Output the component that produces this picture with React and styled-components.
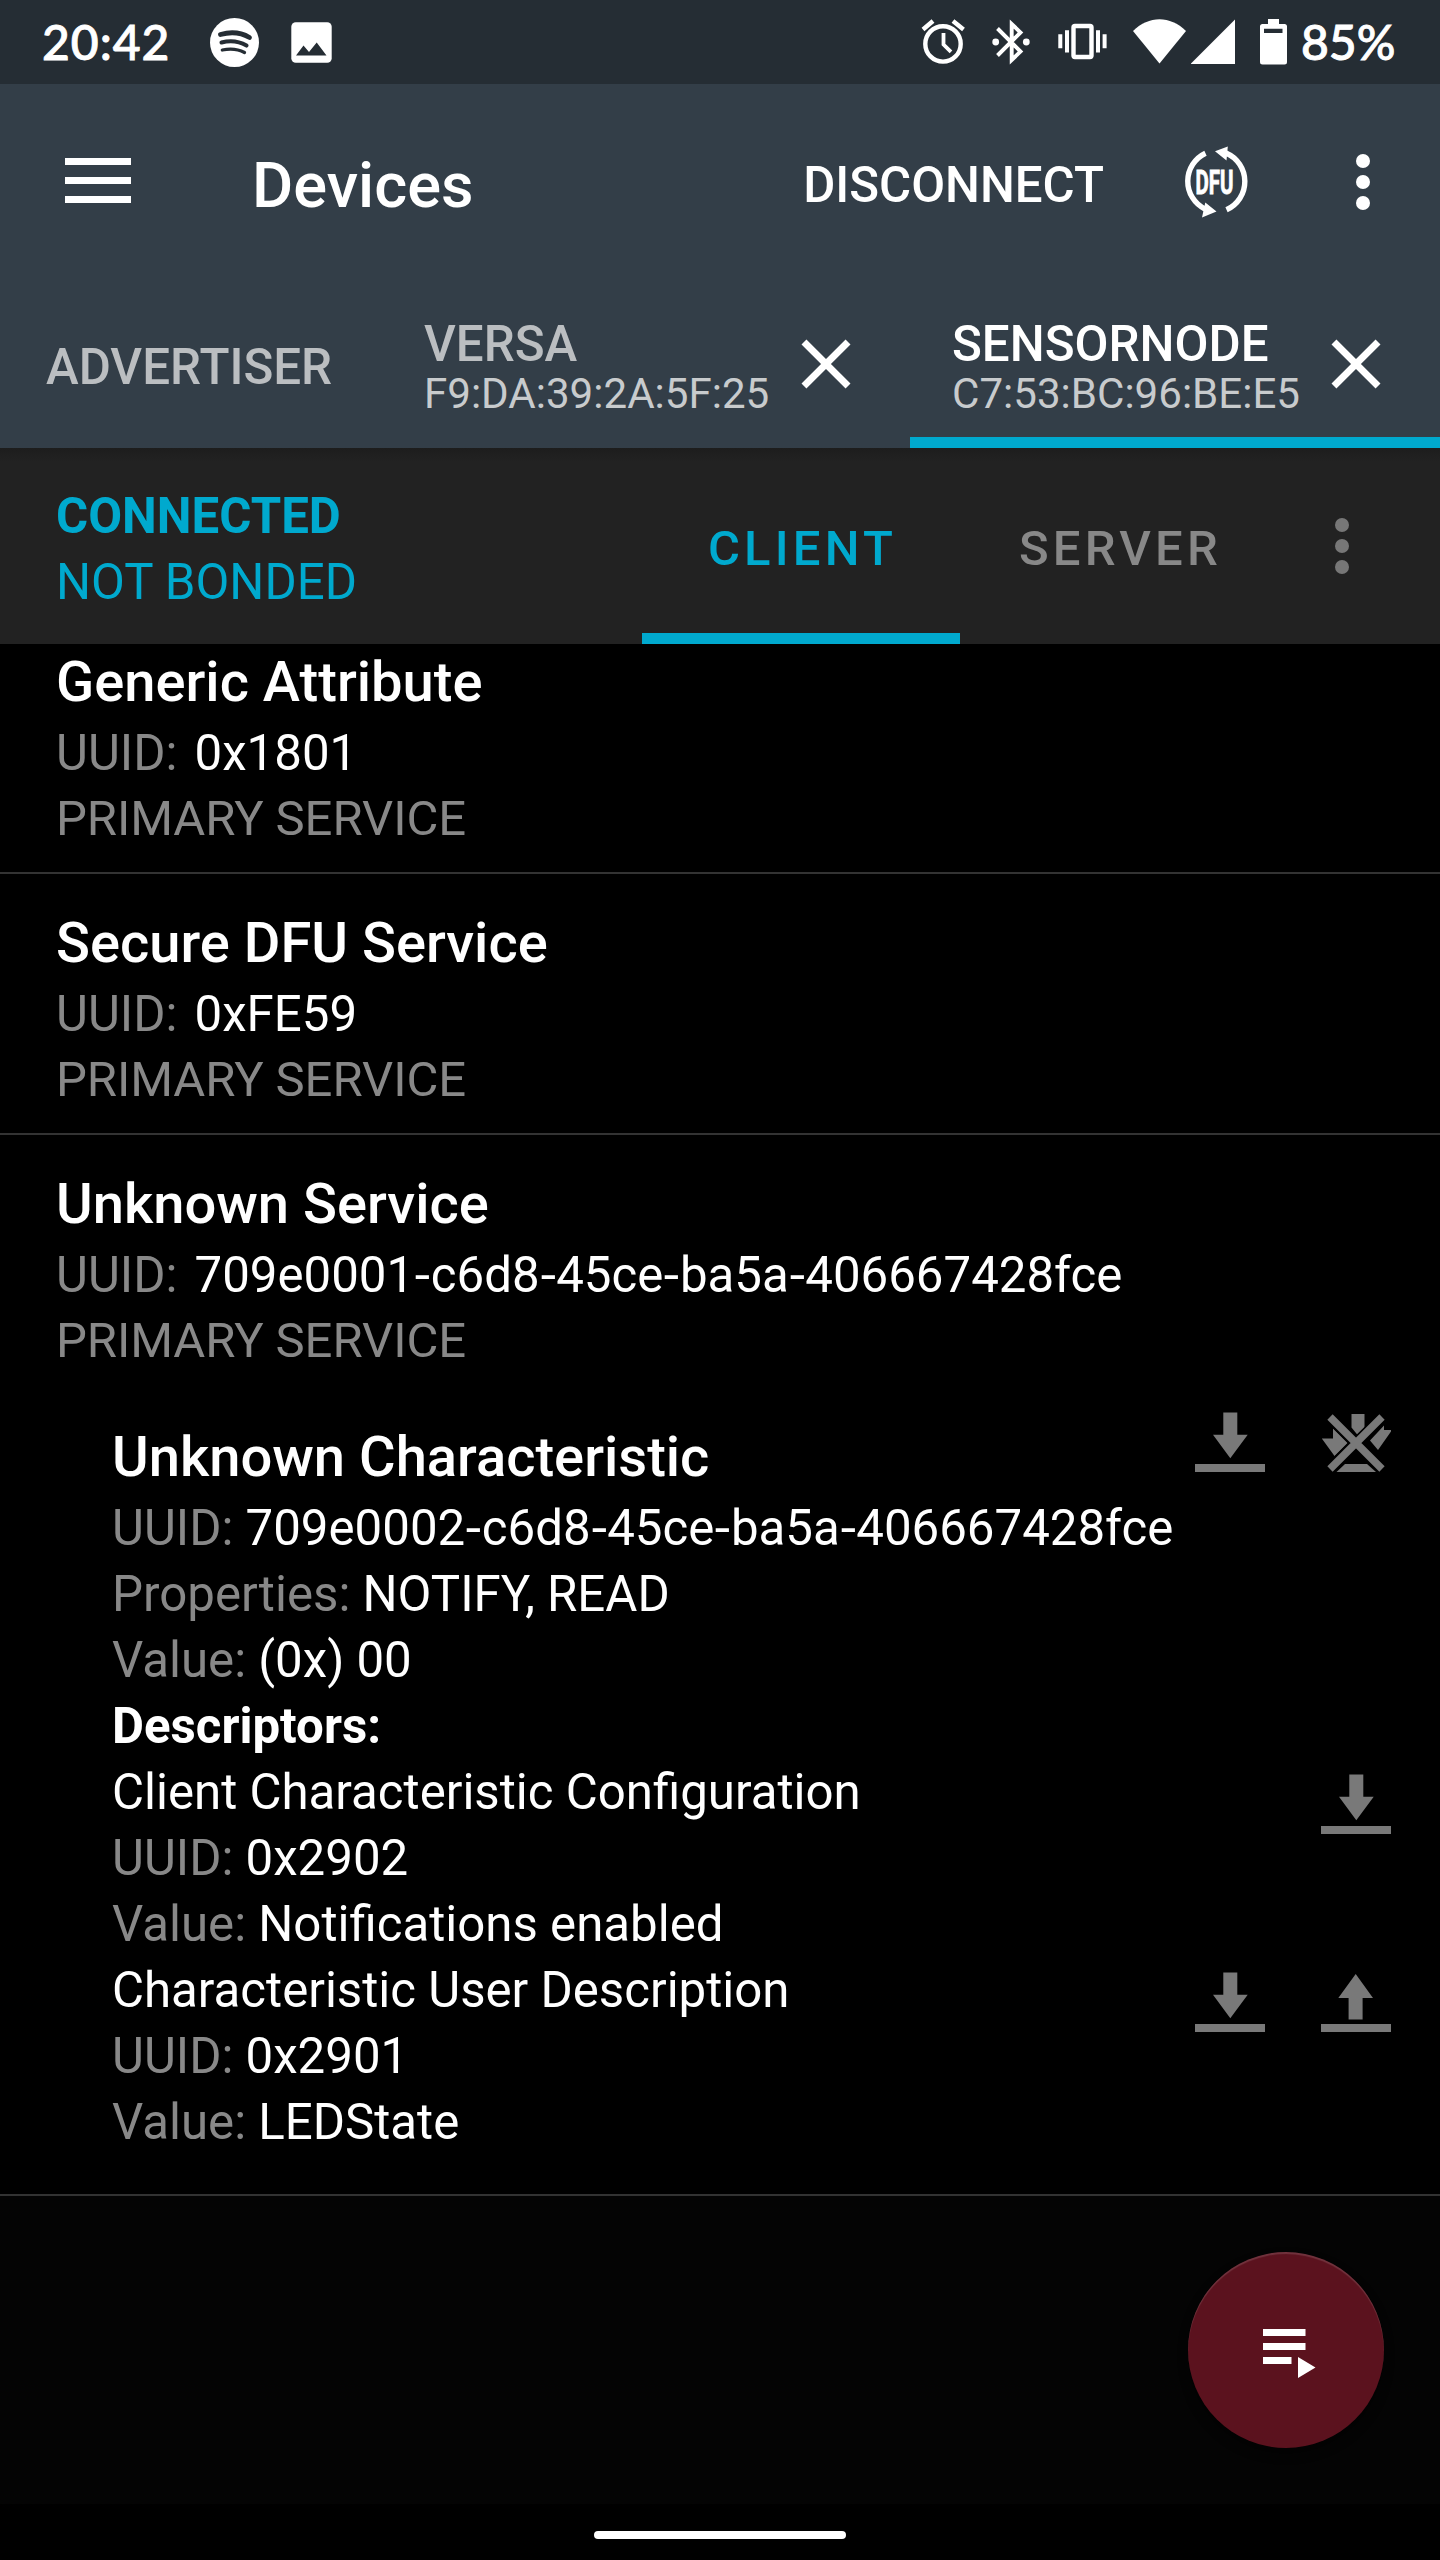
import React from "react";
import styled, { createGlobalStyle, css } from "styled-components";

const GlobalStyle = createGlobalStyle`
  * { box-sizing: border-box; }
  html, body { margin: 0; padding: 0; background: #000; }
  body { font-family: Roboto, "Noto Sans", sans-serif; color: #fff; }
  svg { display: block; flex: none; }
`;

const ACCENT = "#00a9ce";

const Screen = styled.div`
  position: relative;
  width: 1440px;
  height: 2560px;
  overflow: hidden;
  display: flex;
  flex-direction: column;
  background: #000;
`;

const StatusBar = styled.div`
  height: 84px;
  flex: none;
  background: #252d34;
  display: flex;
  justify-content: space-between;
  padding: 0 42px 0 42px;
`;

const StatusGroup = styled.div`
  display: flex;
  align-items: flex-start;
`;

const StatusText = styled.span`
  font-family: Lato, Roboto, sans-serif;
  font-weight: 500;
  font-size: 48px;
  line-height: 60px;
  padding-top: 12px;
  white-space: nowrap;
  width: ${(p) => p.$width}px;
  margin-left: ${(p) => p.$gap || 0}px;
  letter-spacing: ${(p) => p.$spacing || 0}px;
  -webkit-text-stroke: 0.9px #fff;
`;

const StatusIcon = styled.svg`
  margin-top: ${(p) => p.$top}px;
  margin-left: ${(p) => p.$gap}px;
  fill: #fff;
`;

const AppBar = styled.header`
  height: 364px;
  flex: none;
  background: #333e48;
  display: flex;
  flex-direction: column;
`;

const Toolbar = styled.div`
  height: 196px;
  display: flex;
  align-items: center;
  padding: 0 70px 0 65px;
`;

const MenuBars = styled.div`
  width: 66px;
  display: flex;
  flex-direction: column;
  gap: 12px;
  margin-bottom: 3px;
`;

const Bar = styled.span`
  height: 7px;
  background: #fff;
`;

const ToolbarTitle = styled.h1`
  margin: 0 auto 0 121px;
  padding-top: 5px;
  font-size: 63.2px;
  font-weight: 500;
  line-height: 76px;
`;

const ToolbarAction = styled.button`
  border: 0;
  background: none;
  color: #fff;
  font: 500 49.2px/60px Roboto, sans-serif;
  padding: 6px 0 0;
  margin-right: 77px;
`;

const Dots = styled.div`
  width: 14px;
  display: flex;
  flex-direction: column;
  gap: 7px;
  margin-left: ${(p) => p.$gap}px;
`;

const Dot = styled.span`
  height: 14px;
  border-radius: 50%;
  background: ${(p) => p.$color};
`;

const DeviceTabs = styled.nav`
  height: 168px;
  display: flex;
`;

const DeviceTab = styled.div`
  width: ${(p) => p.$width}px;
  display: flex;
  align-items: center;
  justify-content: space-between;
  padding: ${(p) => (p.$active ? "11px" : "0")} 42px 0 ${(p) => p.$pad}px;
  border-bottom: ${(p) => (p.$active ? `11px solid ${ACCENT}` : "0")};
`;

const TabTexts = styled.div`
  display: flex;
  flex-direction: column;
  white-space: nowrap;
  padding-top: 5px;
`;

const TabName = styled.span`
  font-size: 49.3px;
  line-height: 54px;
  font-weight: 500;
  color: ${(p) => (p.$active ? "#fff" : "#bbbec1")};
  padding-top: ${(p) => p.$shift || 0}px;
`;

const TabAddress = styled.span`
  font-size: 42.1px;
  line-height: 46px;
  color: #c8cbcd;
`;

const ConnectionBar = styled.section`
  height: 196px;
  flex: none;
  background: linear-gradient(#1d1d1d, #222 14px);
  display: flex;
  padding-left: 56px;
`;

const ConnectionState = styled.div`
  width: 586px;
  padding-top: 35px;
  color: ${ACCENT};
`;

const StateLine = styled.div`
  font-size: 49.2px;
  line-height: 66px;
  font-weight: ${(p) => (p.$bold ? 700 : 400)};
`;

const RoleTab = styled.div`
  width: 318px;
  display: flex;
  justify-content: center;
  font-size: 49px;
  line-height: 60px;
  font-weight: 500;
  letter-spacing: 4.2px;
  padding: 71px 0 0 3px;
  color: ${(p) => (p.$active ? ACCENT : "#888")};
  border-bottom: ${(p) => (p.$active ? `11px solid ${ACCENT}` : "0")};
`;

const BarOverflow = styled.div`
  display: flex;
  align-items: center;
`;

const ServiceList = styled.main`
  height: 1552px;
  flex: none;
  overflow: hidden;
`;

const ScrollContent = styled.div`
  margin-top: -31px;
`;

const Service = styled.section`
  padding: 34px 0 ${(p) => (p.$expanded ? 40 : 21)}px 56px;
  border-bottom: 2px solid #333;
`;

const Heading = styled.h2`
  margin: 0 0 2px;
  font-size: 56.1px;
  line-height: 70px;
  font-weight: 500;
  white-space: nowrap;
`;

const Line = styled.div`
  font-size: 49.2px;
  line-height: 68px;
  height: 66px;
  white-space: pre;
  color: ${(p) => (p.$muted ? "#888" : "#fff")};
  ${(p) => p.$muted && css`font-size: 49px; letter-spacing: -0.08px;`}
  ${(p) => p.$bold && css`font-weight: 700;`}
`;

const Label = styled.span`
  color: #888;
  margin-right: ${(p) => (p.$wide ? 5 : 0)}px;
`;

const Hyphen = styled.span`
  display: inline-block;
  padding: 0 1.5px;
  transform: scaleX(1.12);
`;

const Entry = styled.div`
  display: flex;
  padding: ${(p) => p.$top || 0}px 21px 0 56px;
`;

const EntryBody = styled.div`
  flex: 1;
  min-width: 0;
`;

const Actions = styled.div`
  display: flex;
  align-self: flex-start;
  margin-top: ${(p) => p.$offset}px;
`;

const IconButton = styled.button`
  width: 126px;
  height: 62px;
  padding: 0;
  border: 0;
  background: none;
  display: flex;
  justify-content: center;
  color: #797979;
`;

const Footer = styled.div`
  height: 308px;
  flex: none;
  background: #040404;
`;

const NavBar = styled.div`
  flex: 1;
  display: flex;
  justify-content: center;
  align-items: flex-start;
  padding-top: 27px;
`;

const HomePill = styled.div`
  width: 252px;
  height: 8px;
  border-radius: 4px;
  background: #fff;
`;

const Fab = styled.button`
  position: absolute;
  right: 56px;
  bottom: 112px;
  width: 196px;
  height: 196px;
  border: 0;
  padding: 0;
  border-radius: 50%;
  background: #5b121e;
  box-shadow: inset 0 2px 1px rgba(255, 255, 255, 0.14), 0 6px 10px rgba(0, 0, 0, 0.5);
`;

const CloseIcon = () => (
  <svg width="84" height="84" viewBox="0 0 24 24" fill="#fff">
    <path d="M19 6.41 17.59 5 12 10.59 6.41 5 5 6.41 10.59 12 5 17.59 6.41 19 12 13.41 17.59 19 19 17.59 13.41 12z" />
  </svg>
);

const DfuIcon = () => (
  <svg width="70" height="72" viewBox="1182 146 70 72" fill="#fff">
    <g fill="none" stroke="#fff" strokeWidth="5.4">
      <path d="M1206.500 153.200A31 31 0 0 0 1206 209" />
      <path d="M1227.500 209.800A31 31 0 0 0 1227 153" />
    </g>
    <path d="M1206.300 202.500 1217.500 211.500 1203 217.500zM1228.800 146.500 1216 151.200 1227.500 160.500z" />
    <text transform="translate(1196.500 193.600) scale(0.61 1)" fontSize="33.500" fontWeight="700" fontFamily="Roboto" stroke="#fff" strokeWidth="0.900">DFU</text>
  </svg>
);

const ReadIcon = () => (
  <IconButton>
    <svg width="70" height="60" viewBox="0 0 70 60" fill="currentColor">
      <path d="M28.300.5h14v22.300h10.400L35.300 46.200 18 22.800h10.300zM0 52h70v8H0z" />
    </svg>
  </IconButton>
);

const WriteIcon = () => (
  <IconButton>
    <svg width="70" height="60" viewBox="0 0 70 60" fill="currentColor">
      <path d="M34.700 2 52 26H41.600v21.500h-14V26H17.300zM0 52h70v8H0z" />
    </svg>
  </IconButton>
);

const NotifyOffIcon = () => (
  <IconButton>
    <svg width="70" height="62" viewBox="1321 1412 70 62" fill="currentColor">
      <path d="M1351.500 1414h13v13.500l-6.500 8-6.500-8zM1333 1428.500 1347.500 1443 1334.500 1456 1321.800 1438.500H1333zM1384 1425.500v4.500h8l-14 20-8-9.500zM1345 1464h22l9 8h-39.500z" />
      <g fill="none" strokeLinecap="butt">
        <path d="M1330 1417.500 1382 1468.500M1382 1417.500 1330 1468.500" stroke="#000" strokeWidth="11" />
        <path d="M1330 1417 1382 1469M1382 1417 1330 1469" stroke="currentColor" strokeWidth="7.500" />
      </g>
    </svg>
  </IconButton>
);

const Overflow = ({ color, gap }) => (
  <Dots $gap={gap}>
    <Dot $color={color} />
    <Dot $color={color} />
    <Dot $color={color} />
  </Dots>
);

const Value = ({ text }) =>
  text.split("-").map((part, i) => (
    <React.Fragment key={i}>
      {i > 0 && <Hyphen>-</Hyphen>}
      {part}
    </React.Fragment>
  ));

const ServiceHead = ({ name, uuid }) => (
  <>
    <Heading>{name}</Heading>
    <Line><Label $wide>UUID: </Label><Value text={uuid} /></Line>
    <Line $muted>PRIMARY SERVICE</Line>
  </>
);

const Field = ({ label, value }) => (
  <Line><Label>{label}: </Label><Value text={value} /></Line>
);

export default function App() {
  return (
    <Screen>
      <GlobalStyle />
      <StatusBar>
        <StatusGroup>
          <StatusText $width={128} $spacing={1}>20:42</StatusText>
          <StatusIcon $top={18} $gap={40} width="49" height="49" viewBox="210 18 49 49">
            <circle cx="234.500" cy="42.500" r="24.500" />
            <g fill="none" stroke="#252d34" strokeLinecap="round">
              <path d="M220.500 34.500C230 31.800 241 32.500 249.500 37.500" strokeWidth="4.800" />
              <path d="M221.500 42.500C230 40.300 239 41.200 246.500 45.500" strokeWidth="4.100" />
              <path d="M222.300 50C230 48.400 238 49 244.500 52.500" strokeWidth="3.300" />
            </g>
          </StatusIcon>
          <StatusIcon $top={22} $gap={32} width="41" height="41" viewBox="291 22 41 41">
            <rect x="291.300" y="22.300" width="40.400" height="40.400" rx="4.500" />
            <path fill="#252d34" d="M296 55.500 303.500 45.500 309 52 316.700 42.500 326.500 55.500z" />
          </StatusIcon>
        </StatusGroup>
        <StatusGroup>
          <StatusIcon $top={19} $gap={0} width="44" height="46" viewBox="921 19 44 46">
            <g fill="none" stroke="#fff">
              <circle cx="943" cy="43.900" r="17.700" strokeWidth="4.400" />
              <path d="M943.500 33V44.500L951 51.800" strokeWidth="3.800" />
              <path d="M923 29.500 933 21M953 21 963.500 29.500" strokeWidth="4.400" />
            </g>
          </StatusIcon>
          <StatusIcon $top={19} $gap={26} width="40" height="46" viewBox="991 19 40 46">
            <path fill="none" stroke="#fff" strokeWidth="3.900" d="M997.500 28.500 1020.500 51.500 1011.700 60V24L1020.500 32.500 997.500 55.500" />
            <circle cx="995.700" cy="42" r="3.400" />
            <circle cx="1026.300" cy="42" r="3.400" />
          </StatusIcon>
          <StatusIcon $top={19} $gap={27} width="50" height="46" viewBox="1058 19 50 46">
            <path d="M1058.300 34.300h4v14h-4zM1065 30.300h4v22.300h-4zM1096 30.300h4v22.300h-4zM1102.600 34.300h4v14h-4z" />
            <rect x="1073.500" y="26" width="18" height="31" rx="1.500" fill="none" stroke="#fff" strokeWidth="4.400" />
          </StatusIcon>
          <StatusIcon $top={19} $gap={25} width="53" height="45" viewBox="1133 19 53 45">
            <path d="M1133 31C1149 15.300 1170 15.300 1186 31L1159.500 63.500z" />
          </StatusIcon>
          <StatusIcon $top={19} $gap={5} width="44" height="45" viewBox="1191 19 44 45">
            <path d="M1190.500 64 1235 19.500V64z" />
          </StatusIcon>
          <StatusIcon $top={19} $gap={25} width="27" height="46" viewBox="1260 19 27 46">
            <path fillRule="evenodd" d="M1268 19h11v5h5.500a2.500 2.500 0 0 1 2.500 2.500V62a2.500 2.500 0 0 1-2.500 2.500h-22a2.500 2.500 0 0 1-2.500-2.500V26.500a2.500 2.500 0 0 1 2.500-2.500h5.500zM1264 28.700v4.300h18.500v-4.300z" />
          </StatusIcon>
          <StatusText $width={97} $gap={14}>85%</StatusText>
        </StatusGroup>
      </StatusBar>

      <AppBar>
        <Toolbar>
          <MenuBars><Bar /><Bar /><Bar /></MenuBars>
          <ToolbarTitle>Devices</ToolbarTitle>
          <ToolbarAction>DISCONNECT</ToolbarAction>
          <DfuIcon />
          <Overflow color="#fff" gap={105} />
        </Toolbar>
        <DeviceTabs>
          <DeviceTab $width={382} $pad={46}>
            <TabName $shift={5}>ADVERTISER</TabName>
          </DeviceTab>
          <DeviceTab $width={528} $pad={42}>
            <TabTexts>
              <TabName>VERSA</TabName>
              <TabAddress>F9:DA:39:2A:5F:25</TabAddress>
            </TabTexts>
            <CloseIcon />
          </DeviceTab>
          <DeviceTab $width={530} $pad={42} $active>
            <TabTexts>
              <TabName $active>SENSORNODE</TabName>
              <TabAddress>C7:53:BC:96:BE:E5</TabAddress>
            </TabTexts>
            <CloseIcon />
          </DeviceTab>
        </DeviceTabs>
      </AppBar>

      <ConnectionBar>
        <ConnectionState>
          <StateLine $bold>CONNECTED</StateLine>
          <StateLine>NOT BONDED</StateLine>
        </ConnectionState>
        <RoleTab $active>CLIENT</RoleTab>
        <RoleTab>SERVER</RoleTab>
        <BarOverflow><Overflow color="#777" gap={57} /></BarOverflow>
      </ConnectionBar>

      <ServiceList>
        <ScrollContent>
          <Service><ServiceHead name="Generic Attribute" uuid="0x1801" /></Service>
          <Service><ServiceHead name="Secure DFU Service" uuid="0xFE59" /></Service>
          <Service $expanded>
            <ServiceHead name="Unknown Service" uuid="709e0001-c6d8-45ce-ba5a-406667428fce" />
            <Entry $top={49}>
              <EntryBody>
                <Heading>Unknown Characteristic</Heading>
                <Field label="UUID" value="709e0002-c6d8-45ce-ba5a-406667428fce" />
                <Field label="Properties" value="NOTIFY, READ" />
                <Field label="Value" value="(0x) 00" />
                <Line $bold>Descriptors:</Line>
              </EntryBody>
              <Actions $offset={-10}><ReadIcon /><NotifyOffIcon /></Actions>
            </Entry>
            <Entry>
              <EntryBody>
                <Line>Client Characteristic Configuration</Line>
                <Field label="UUID" value="0x2902" />
                <Field label="Value" value="Notifications enabled" />
              </EntryBody>
              <Actions $offset={16}><ReadIcon /></Actions>
            </Entry>
            <Entry>
              <EntryBody>
                <Line>Characteristic User Description</Line>
                <Field label="UUID" value="0x2901" />
                <Field label="Value" value="LEDState" />
              </EntryBody>
              <Actions $offset={16}><ReadIcon /><WriteIcon /></Actions>
            </Entry>
          </Service>
        </ScrollContent>
      </ServiceList>

      <Footer />
      <NavBar><HomePill /></NavBar>
      <Fab>
        <svg width="196" height="196" viewBox="1188 2252 196 196" fill="#fff">
          <path d="M1263 2329h42.500v7H1263zM1263 2343h42.500v7H1263zM1263 2357h28.500v7H1263zM1298 2357l17.500 10.500L1298 2378z" />
        </svg>
      </Fab>
    </Screen>
  );
}
